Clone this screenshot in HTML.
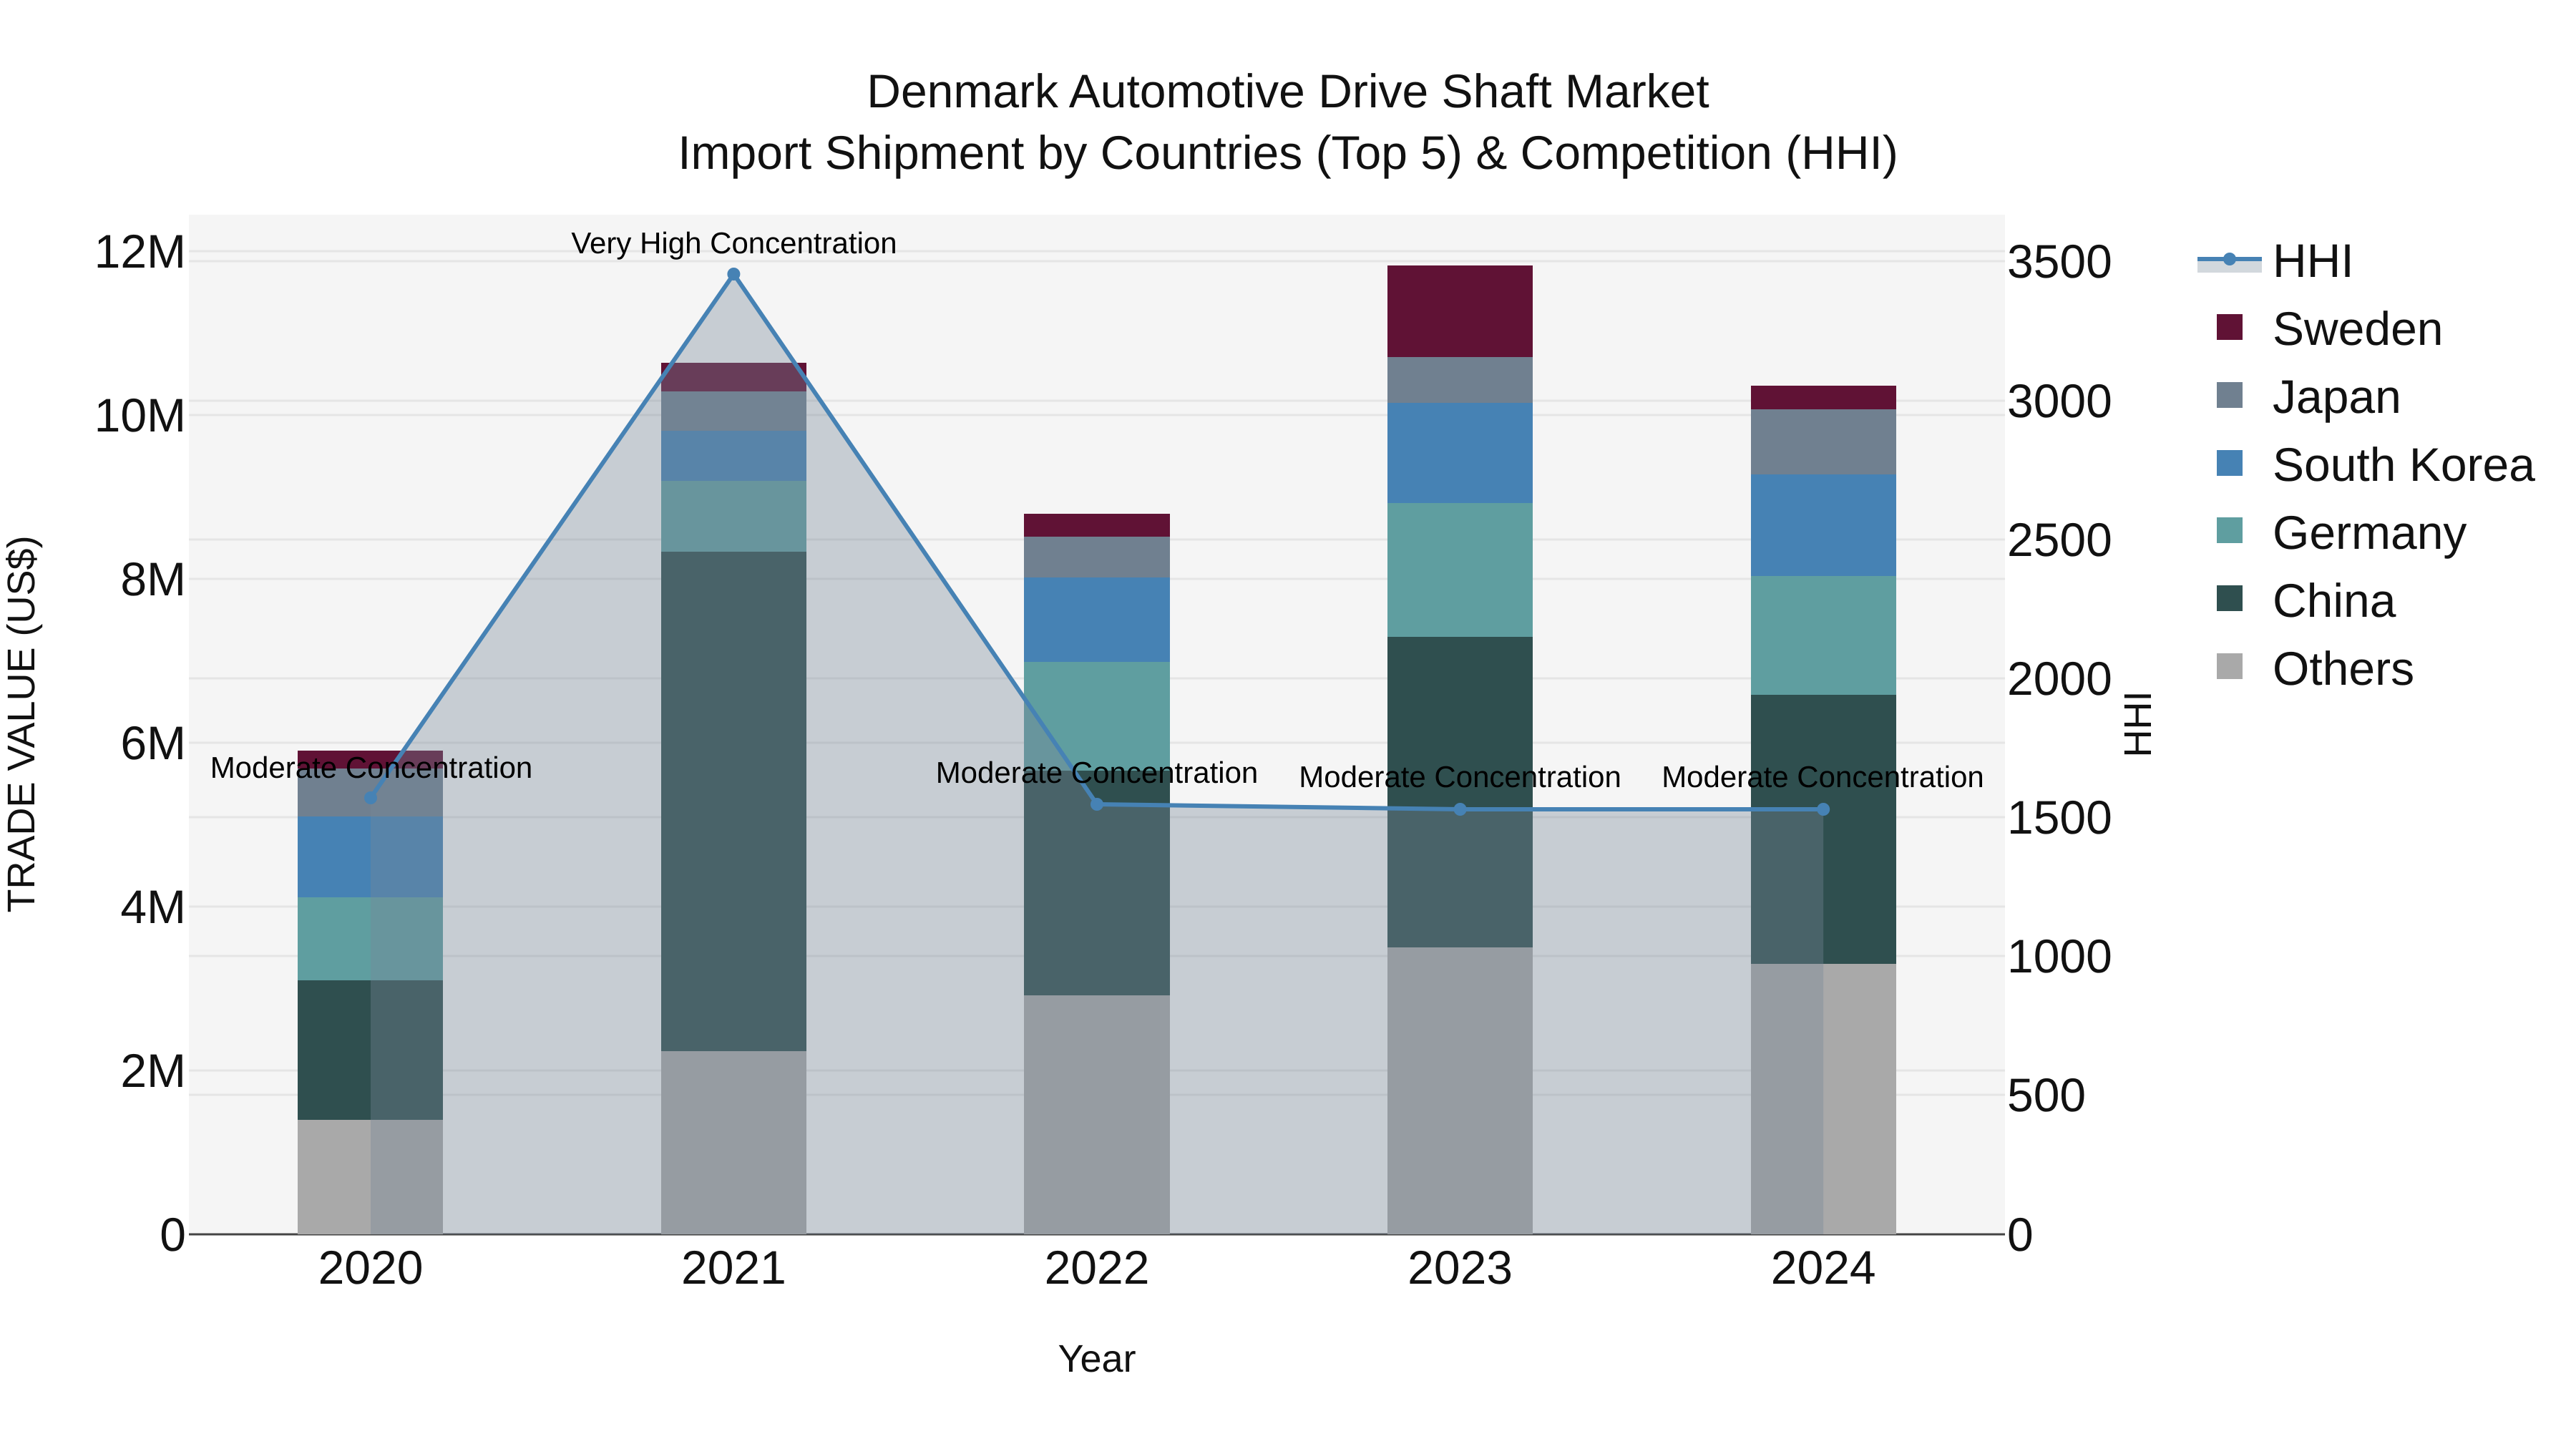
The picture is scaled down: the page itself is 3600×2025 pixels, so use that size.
<!DOCTYPE html>
<html>
<head>
<meta charset="utf-8">
<title>Denmark Automotive Drive Shaft Market</title>
<style>
html,body{margin:0;padding:0;background:#fff;width:3600px;height:2025px;overflow:hidden}
svg{display:block}
text{font-family:"Liberation Sans",Arial,sans-serif;fill:#111;text-rendering:geometricPrecision}
.t{font-size:66px}
.a{font-size:54px}
.n{font-size:42px;fill:#000;text-anchor:middle}
.m{text-anchor:middle}
.e{text-anchor:end}
</style>
</head>
<body>
<svg xmlns="http://www.w3.org/2000/svg" width="3600" height="2025" viewBox="0 0 3600 2025">
<rect x="0" y="0" width="3600" height="2025" fill="#fff"/>
<rect x="264" y="300" width="2538" height="1425" fill="#f5f5f5"/>
<g stroke="#e5e5e5" stroke-width="3">
<path d="M264 351H2802M264 580H2802M264 809H2802M264 1038H2802M264 1267H2802M264 1496H2802"/>
<path d="M264 365H2802M264 560H2802M264 754H2802M264 948H2802M264 1142H2802M264 1336H2802M264 1530H2802"/>
</g>
<path d="M264 1725H2802" stroke="#444" stroke-width="3"/>
<g>
<rect x="416" y="1049" width="203" height="25" fill="#601235"/>
<rect x="416" y="1074" width="203" height="67" fill="#708090"/>
<rect x="416" y="1141" width="203" height="113" fill="#4682b4"/>
<rect x="416" y="1254" width="203" height="116" fill="#5f9ea0"/>
<rect x="416" y="1370" width="203" height="195" fill="#2f4f4f"/>
<rect x="416" y="1565" width="203" height="160" fill="#a9a9a9"/>

<rect x="924" y="507" width="203" height="40" fill="#601235"/>
<rect x="924" y="547" width="203" height="55" fill="#708090"/>
<rect x="924" y="602" width="203" height="70" fill="#4682b4"/>
<rect x="924" y="672" width="203" height="99" fill="#5f9ea0"/>
<rect x="924" y="771" width="203" height="698" fill="#2f4f4f"/>
<rect x="924" y="1469" width="203" height="256" fill="#a9a9a9"/>

<rect x="1431" y="718" width="204" height="32" fill="#601235"/>
<rect x="1431" y="750" width="204" height="57" fill="#708090"/>
<rect x="1431" y="807" width="204" height="118" fill="#4682b4"/>
<rect x="1431" y="925" width="204" height="152" fill="#5f9ea0"/>
<rect x="1431" y="1077" width="204" height="314" fill="#2f4f4f"/>
<rect x="1431" y="1391" width="204" height="334" fill="#a9a9a9"/>

<rect x="1939" y="371" width="203" height="128" fill="#601235"/>
<rect x="1939" y="499" width="203" height="64" fill="#708090"/>
<rect x="1939" y="563" width="203" height="140" fill="#4682b4"/>
<rect x="1939" y="703" width="203" height="187" fill="#5f9ea0"/>
<rect x="1939" y="890" width="203" height="434" fill="#2f4f4f"/>
<rect x="1939" y="1324" width="203" height="401" fill="#a9a9a9"/>

<rect x="2447" y="539" width="203" height="33" fill="#601235"/>
<rect x="2447" y="572" width="203" height="91" fill="#708090"/>
<rect x="2447" y="663" width="203" height="142" fill="#4682b4"/>
<rect x="2447" y="805" width="203" height="166" fill="#5f9ea0"/>
<rect x="2447" y="971" width="203" height="376" fill="#2f4f4f"/>
<rect x="2447" y="1347" width="203" height="378" fill="#a9a9a9"/>
</g>
<polygon points="518,1115 1025.4,383 1533,1124 2040.6,1131 2548.2,1131 2548.2,1725 518,1725" fill="rgba(119,136,153,.37)"/>
<polyline points="518,1115 1025.4,383 1533,1124 2040.6,1131 2548.2,1131" fill="none" stroke="#4682b4" stroke-width="6" stroke-linejoin="round"/>
<g fill="#4682b4">
<circle cx="518" cy="1115" r="9"/>
<circle cx="1025.4" cy="383" r="9"/>
<circle cx="1533" cy="1124" r="9"/>
<circle cx="2040.6" cy="1131" r="9"/>
<circle cx="2548.2" cy="1131" r="9"/>
</g>
<text class="n" x="519" y="1087">Moderate Concentration</text>
<text class="n" x="1026" y="354">Very High Concentration</text>
<text class="n" x="1533" y="1094">Moderate Concentration</text>
<text class="n" x="2040.6" y="1100">Moderate Concentration</text>
<text class="n" x="2547.5" y="1100">Moderate Concentration</text>

<text class="t m" x="1800" y="150">Denmark Automotive Drive Shaft Market</text>
<text class="t m" x="1800" y="236">Import Shipment by Countries (Top 5) &amp; Competition (HHI)</text>

<g class="t">
<text class="t e" x="260" y="374">12M</text>
<text class="t e" x="260" y="603">10M</text>
<text class="t e" x="260" y="832">8M</text>
<text class="t e" x="260" y="1061">6M</text>
<text class="t e" x="260" y="1290">4M</text>
<text class="t e" x="260" y="1519">2M</text>
<text class="t e" x="260" y="1748">0</text>
</g>
<g>
<text class="t" x="2805" y="388">3500</text>
<text class="t" x="2805" y="583">3000</text>
<text class="t" x="2805" y="777">2500</text>
<text class="t" x="2805" y="971">2000</text>
<text class="t" x="2805" y="1165">1500</text>
<text class="t" x="2805" y="1359">1000</text>
<text class="t" x="2805" y="1553">500</text>
<text class="t" x="2805" y="1748">0</text>
</g>
<g>
<text class="t m" x="518" y="1794">2020</text>
<text class="t m" x="1025.4" y="1794">2021</text>
<text class="t m" x="1533" y="1794">2022</text>
<text class="t m" x="2040.6" y="1794">2023</text>
<text class="t m" x="2548.2" y="1794">2024</text>
</g>
<text class="a m" x="1533" y="1917">Year</text>
<text class="a m" transform="translate(48 1012) rotate(-90)">TRADE VALUE (US$)</text>
<text class="a m" transform="translate(3006 1012) rotate(-90)">HHI</text>

<rect x="3071" y="362" width="90" height="19" fill="rgba(119,136,153,.33)"/>
<path d="M3071 362H3161" stroke="#4682b4" stroke-width="6"/>
<circle cx="3116" cy="362" r="9" fill="#4682b4"/>
<rect x="3098" y="439" width="36" height="36" fill="#601235"/>
<rect x="3098" y="534" width="36" height="36" fill="#708090"/>
<rect x="3098" y="629" width="36" height="36" fill="#4682b4"/>
<rect x="3098" y="723" width="36" height="36" fill="#5f9ea0"/>
<rect x="3098" y="818" width="36" height="36" fill="#2f4f4f"/>
<rect x="3098" y="913" width="36" height="36" fill="#a9a9a9"/>
<text class="t" x="3176" y="387">HHI</text>
<text class="t" x="3176" y="482">Sweden</text>
<text class="t" x="3176" y="577">Japan</text>
<text class="t" x="3176" y="672">South Korea</text>
<text class="t" x="3176" y="767">Germany</text>
<text class="t" x="3176" y="862">China</text>
<text class="t" x="3176" y="957">Others</text>
</svg>
</body>
</html>
